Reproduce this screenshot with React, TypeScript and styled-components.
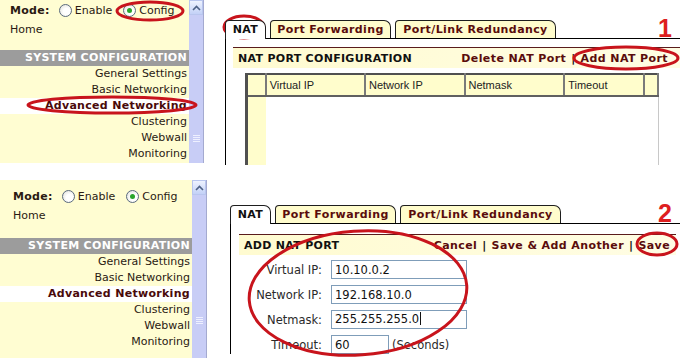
import React from "react";
import styled, { createGlobalStyle } from "styled-components";

const GlobalStyle = createGlobalStyle`
  html, body { margin: 0; padding: 0; background: #fff; }
  body {
    font-family: "DejaVu Sans", Verdana, sans-serif;
    font-size: 11px;
    color: #2a1a12;
  }
`;

const Page = styled.div`
  position: relative;
  width: 688px;
  height: 364px;
  overflow: hidden;
  background: #fff;
`;

const Shot = styled.section<{ $gap: number; $height: number }>`
  display: flex;
  align-items: flex-start;
  margin-top: ${p => p.$gap}px;
  height: ${p => p.$height}px;
  overflow: hidden;
`;

/* ---------- sidebar ---------- */

const Sidebar = styled.aside<{ $height: number }>`
  display: flex;
  height: ${p => p.$height}px;
  background: #fffdd2;
  flex-shrink: 0;
`;

const Nav = styled.nav<{ $width: number; $padTop: number; $padLeft: number }>`
  width: ${p => p.$width}px;
  padding-top: ${p => p.$padTop}px;
  box-sizing: border-box;
  display: flex;
  flex-direction: column;
  --pad-left: ${p => p.$padLeft}px;
`;

const ModeRow = styled.div`
  display: flex;
  align-items: center;
  height: 20px;
  padding-left: var(--pad-left);
  color: #2a1a12;
`;

const ModeLabel = styled.span`
  font-weight: bold;
  letter-spacing: 0.3px;
  margin-right: 9px;
`;

const RadioLabel = styled.label`
  display: flex;
  align-items: center;
  gap: 3px;
  margin-right: 11px;
`;

const RadioDot = styled.span<{ $checked?: boolean }>`
  width: 11px;
  height: 11px;
  border-radius: 50%;
  border: 1px solid #5a6a7e;
  background: radial-gradient(circle at 60% 60%, #ffffff 35%, #dcdcd4 100%);
  display: flex;
  align-items: center;
  justify-content: center;
  &::after {
    content: "";
    width: 5px;
    height: 5px;
    border-radius: 50%;
    background: ${p => (p.$checked ? "#2aa52a" : "transparent")};
  }
`;

const HomeLink = styled.div`
  height: 20px;
  line-height: 20px;
  padding-left: var(--pad-left);
`;

const SectionBar = styled.div<{ $mt: number }>`
  margin-top: ${p => p.$mt}px;
  height: 16px;
  line-height: 16px;
  background: #9c9c9c;
  color: #fff;
  font-weight: bold;
  letter-spacing: 0.3px;
  text-align: right;
  padding-right: 2px;
  white-space: nowrap;
  overflow: hidden;
`;

const MenuItem = styled.div<{ $active?: boolean }>`
  height: 16px;
  line-height: 16px;
  text-align: right;
  padding-right: 2px;
  white-space: nowrap;
  background: ${p => (p.$active ? "#fff" : "transparent")};
  color: ${p => (p.$active ? "#4a0a0a" : "#2a1a12")};
  font-weight: ${p => (p.$active ? "bold" : "normal")};
  letter-spacing: ${p => (p.$active ? "0.3px" : "0")};
`;

const Scrollbar = styled.div`
  width: 14px;
  height: 100%;
  display: flex;
  flex-direction: column;
  background: #c8cdf6;
  border-right: 1px solid #a4aad0;
`;

const ArrowButton = styled.div`
  height: 15px;
  box-sizing: border-box;
  border: 1px solid #b9c6ee;
  background: linear-gradient(#eef3ff, #c3d1f7);
  display: flex;
  align-items: center;
  justify-content: center;
`;

const Thumb = styled.div<{ $gripTop: number }>`
  flex: 1;
  padding-top: ${p => p.$gripTop}px;
  display: flex;
  flex-direction: column;
  align-items: center;
  gap: 1px;
`;

const GripLine = styled.span`
  width: 7px;
  height: 1px;
  background: #eef0ff;
`;

/* ---------- main panel ---------- */

const Main = styled.main<{ $ml: number; $pt: number }>`
  margin-left: ${p => p.$ml}px;
  padding-top: ${p => p.$pt}px;
  flex: 1;
  margin-right: 8px;
  display: flex;
  flex-direction: column;
  min-width: 0;
`;

const TabsRow = styled.div`
  display: flex;
  align-items: flex-end;
  gap: 4px;
  height: 18px;
`;

const Tab = styled.div<{ $active?: boolean; $w: number }>`
  width: ${p => p.$w}px;
  box-sizing: border-box;
  height: ${p => (p.$active ? 19 : 18)}px;
  margin-bottom: ${p => (p.$active ? -1 : 0)}px;
  position: relative;
  z-index: 1;
  border: 1px solid #1e1e1e;
  border-bottom: none;
  border-radius: 4px 7px 0 0;
  background: ${p => (p.$active ? "#fff" : "#fffccc")};
  color: ${p => (p.$active ? "#111" : "#5a0c0c")};
  font-weight: bold;
  letter-spacing: 0.4px;
  text-align: center;
  line-height: 17px;
  white-space: nowrap;
`;

const StepNumber = styled.div`
  margin-left: auto;
  align-self: flex-start;
  margin-top: -4px;
  padding-right: 8px;
  font-family: "Liberation Sans", Arial, sans-serif;
  font-weight: bold;
  font-size: 25px;
  line-height: 1;
  color: #de1f1f;
`;

const Panel = styled.div<{ $pt: number; $pl: number }>`
  flex: 1;
  border-left: 1px solid #000;
  border-top: 1px solid #000;
  padding: ${p => p.$pt}px 0 0 ${p => p.$pl}px;
  display: flex;
  flex-direction: column;
`;

const HeaderBar = styled.div<{ $mr: number; $pr: number }>`
  display: flex;
  justify-content: space-between;
  align-items: center;
  height: 20px;
  margin-right: ${p => p.$mr}px;
  padding: 0 ${p => p.$pr}px 0 5px;
  border-top: 1px solid #5a1c1c;
  background: linear-gradient(90deg, #fffbd0, #fffde4);
  font-weight: bold;
  letter-spacing: 0.4px;
`;

const HeaderTitle = styled.span`
  color: #111;
  letter-spacing: 0.3px;
`;

const Actions = styled.span`
  display: flex;
  gap: 5px;
  color: #5a0c0c;
`;

const Pipe = styled.span`
  color: #111;
`;

const Grid = styled.table`
  margin: 5px 0 0 12px;
  width: 414px;
  height: 100px;
  border-collapse: collapse;
  border-left: 3px solid #505050;
  border-top: 2px solid #505050;
  border-right: 1px solid #c8c8c8;
  font-family: "Liberation Sans", Arial, sans-serif;
  font-size: 11px;
`;

const HeadCell = styled.th<{ $w: number }>`
  width: ${p => p.$w}px;
  height: 20px;
  padding: 0 0 0 3px;
  text-align: left;
  font-weight: normal;
  color: #222;
  background: #fffdcc;
  border-right: 2px solid #7a7a7a;
  border-bottom: 2px solid #606060;
`;

const BodyCell = styled.td<{ $stub?: boolean }>`
  background: ${p => (p.$stub ? "#fffdcc" : "#fff")};
`;

const Form = styled.div`
  display: grid;
  grid-template-columns: 83px auto;
  column-gap: 9px;
  row-gap: 6px;
  margin-top: 5px;
  align-items: center;
  font-size: 11.5px;
`;

const FieldLabel = styled.label`
  text-align: right;
  color: #2a2a2a;
`;

const FieldRow = styled.div`
  display: flex;
  align-items: center;
  gap: 3px;
`;

const TextInput = styled.input<{ $w: number }>`
  width: ${p => p.$w}px;
  height: 19px;
  box-sizing: border-box;
  margin: 0;
  padding: 0 3px;
  border: 1px solid #7f9db9;
  font-family: "DejaVu Sans", Verdana, sans-serif;
  font-size: 11.5px;
  color: #111;
  outline: none;
`;

const Caret = styled.span`
  display: inline-block;
  width: 1px;
  height: 13px;
  margin-left: 1px;
  background: #111;
  vertical-align: -2px;
`;

const FakeInput = styled.div<{ $w: number }>`
  width: ${p => p.$w}px;
  height: 19px;
  box-sizing: border-box;
  padding: 0 3px;
  border: 1px solid #7f9db9;
  line-height: 17px;
  color: #111;
  background: #fff;
`;

const Hint = styled.span`
  color: #2a2a2a;
`;

const Marks = styled.svg`
  position: absolute;
  left: 0;
  top: 0;
  pointer-events: none;
`;

/* ---------- pieces ---------- */

const menu = [
  "General Settings",
  "Basic Networking",
  "Advanced Networking",
  "Clustering",
  "Webwall",
  "Monitoring",
];

type SideProps = {
  height: number;
  width: number;
  padTop: number;
  padLeft: number;
  barGap: number;
  gripTop: number;
};

const SideMenu: React.FC<SideProps> = ({ height, width, padTop, padLeft, barGap, gripTop }) => (
  <Sidebar $height={height}>
    <Nav $width={width} $padTop={padTop} $padLeft={padLeft}>
      <ModeRow>
        <ModeLabel>Mode:</ModeLabel>
        <RadioLabel>
          <RadioDot />
          Enable
        </RadioLabel>
        <RadioLabel>
          <RadioDot $checked />
          Config
        </RadioLabel>
      </ModeRow>
      <HomeLink>Home</HomeLink>
      <SectionBar $mt={barGap}>SYSTEM CONFIGURATION</SectionBar>
      {menu.map(m => (
        <MenuItem key={m} $active={m === "Advanced Networking"}>
          {m}
        </MenuItem>
      ))}
    </Nav>
    <Scrollbar>
      <ArrowButton>
        <svg width="9" height="6" viewBox="0 0 9 6">
          <path d="M1 5 L4.5 1.5 L8 5" fill="none" stroke="#4d6185" strokeWidth="1.6" />
        </svg>
      </ArrowButton>
      <Thumb $gripTop={gripTop}>
        <GripLine />
        <GripLine />
        <GripLine />
        <GripLine />
      </Thumb>
    </Scrollbar>
  </Sidebar>
);

const Tabs: React.FC<{ step: string }> = ({ step }) => (
  <TabsRow>
    <Tab $active $w={41}>NAT</Tab>
    <Tab $w={121}>Port Forwarding</Tab>
    <Tab $w={161}>Port/Link Redundancy</Tab>
    <StepNumber>{step}</StepNumber>
  </TabsRow>
);

const cols = [
  { label: "", w: 14 },
  { label: "Virtual IP", w: 96 },
  { label: "Network IP", w: 96 },
  { label: "Netmask", w: 96 },
  { label: "Timeout", w: 76 },
  { label: "", w: 9 },
];

const App: React.FC = () => (
  <Page>
    <GlobalStyle />

    <Shot $gap={0} $height={165}>
      <SideMenu height={163} width={189} padTop={0} padLeft={10} barGap={10} gripTop={120} />
      <Main $ml={21} $pt={20}>
        <Tabs step="1" />
        <Panel $pt={8} $pl={7}>
          <HeaderBar $mr={0} $pr={12}>
            <HeaderTitle>NAT PORT CONFIGURATION</HeaderTitle>
            <Actions>
              <span>Delete NAT Port</span>
              <Pipe>|</Pipe>
              <span>Add NAT Port</span>
            </Actions>
          </HeaderBar>
          <Grid>
            <thead>
              <tr>
                {cols.map((c, i) => (
                  <HeadCell key={i} $w={c.w}>{c.label}</HeadCell>
                ))}
              </tr>
            </thead>
            <tbody>
              <tr>
                <BodyCell $stub />
                <BodyCell colSpan={5} />
              </tr>
            </tbody>
          </Grid>
        </Panel>
      </Main>
    </Shot>

    <Shot $gap={15} $height={184}>
      <SideMenu height={178} width={192} padTop={6} padLeft={13} barGap={12} gripTop={122} />
      <Main $ml={23} $pt={25}>
        <Tabs step="2" />
        <Panel $pt={10} $pl={8}>
          <HeaderBar $mr={4} $pr={6}>
            <HeaderTitle>ADD NAT PORT</HeaderTitle>
            <Actions>
              <span>Cancel</span>
              <Pipe>|</Pipe>
              <span>Save &amp; Add Another</span>
              <Pipe>|</Pipe>
              <span>Save</span>
            </Actions>
          </HeaderBar>
          <Form>
            <FieldLabel>Virtual IP:</FieldLabel>
            <TextInput $w={136} value="10.10.0.2" readOnly />
            <FieldLabel>Network IP:</FieldLabel>
            <TextInput $w={136} value="192.168.10.0" readOnly />
            <FieldLabel>Netmask:</FieldLabel>
            <FakeInput $w={136}>
              255.255.255.0
              <Caret />
            </FakeInput>
            <FieldLabel>Timeout:</FieldLabel>
            <FieldRow>
              <TextInput $w={58} value="60" readOnly />
              <Hint>(Seconds)</Hint>
            </FieldRow>
          </Form>
        </Panel>
      </Main>
    </Shot>

    <Marks width="688" height="364" viewBox="0 0 688 364">
      <g fill="none" stroke="#c8141c" strokeWidth="3">
        <ellipse cx="150" cy="11" rx="33" ry="9" />
        <ellipse cx="112" cy="105" rx="84" ry="8" />
        <ellipse cx="244" cy="27" rx="20" ry="11" />
        <ellipse cx="626" cy="58" rx="52" ry="11" />
        <ellipse cx="358" cy="293" rx="109" ry="62" transform="rotate(-4 358 293)" />
        <ellipse cx="657" cy="244" rx="20" ry="11" />
      </g>
    </Marks>
  </Page>
);

export default App;
